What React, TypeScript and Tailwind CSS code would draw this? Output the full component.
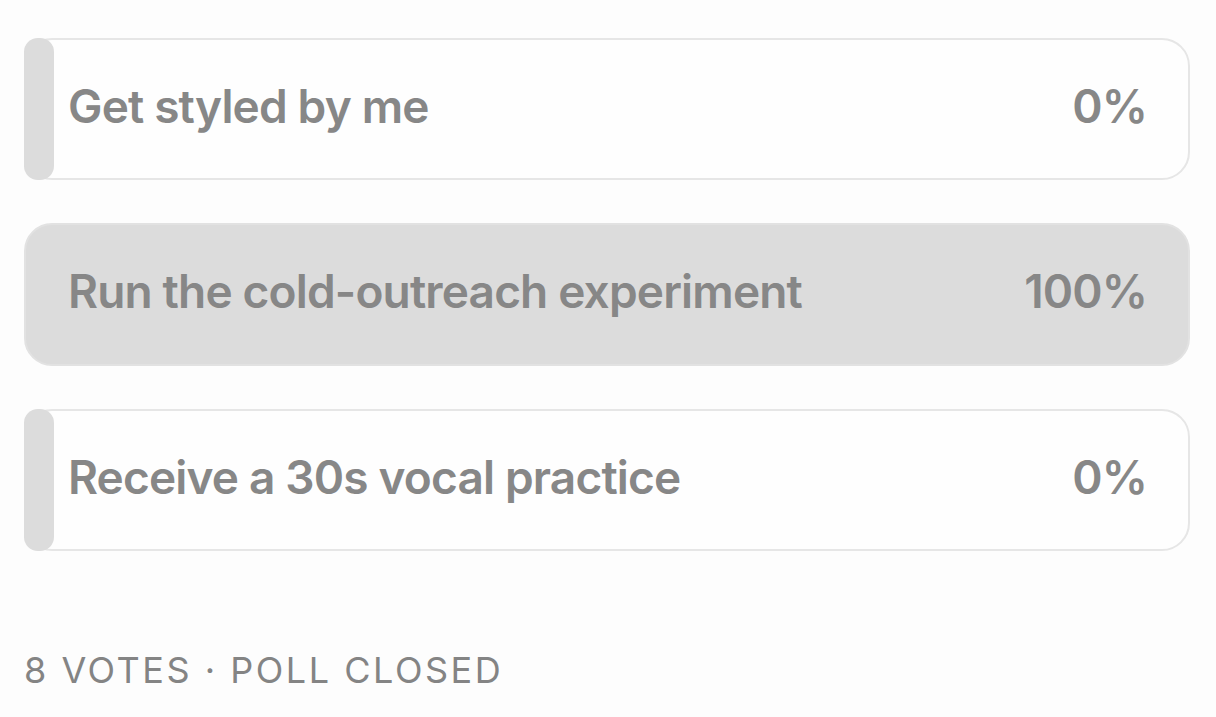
const options = [
  { label: 'Get styled by me', pct: 0 },
  { label: 'Run the cold-outreach experiment', pct: 100 },
  { label: 'Receive a 30s vocal practice', pct: 0 },
]

export default function App() {
  return (
    <div className="min-h-screen bg-[#fdfdfd] px-6 pt-[38px]" style={{ fontFamily: 'Inter, "Noto Sans", sans-serif' }}>
      <div className="flex w-[1166px] flex-col gap-[43px]">
        {options.map((o) => (
          <div
            key={o.label}
            className={
              o.pct === 100
                ? 'relative flex h-[143px] items-center justify-between rounded-[28px] border-2 border-[#e2e2e2] bg-[#dcdcdc] pb-[6px] pl-[42px] pr-[41px]'
                : 'relative flex h-[142px] items-center justify-between rounded-[28px] border-2 border-[#e6e6e6] bg-[#fefefe] pb-[6px] pl-[42px] pr-[41px]'
            }
          >
            {o.pct === 0 && (
              <div className="absolute -bottom-[2px] -left-[2px] -top-[2px] w-[30px] rounded-[14px] bg-[#dcdcdc]" />
            )}
            <span className="relative text-[46px] font-semibold tracking-[-0.018em] text-[#878787]">{o.label}</span>
            <span className="relative text-[46px] font-semibold tracking-[-0.02em] text-[#878787]">{o.pct}%</span>
          </div>
        ))}
      </div>
      <div className="mt-[92px] text-[36px] tracking-[0.07em] text-[#848484]">8 VOTES · POLL CLOSED</div>
    </div>
  )
}
